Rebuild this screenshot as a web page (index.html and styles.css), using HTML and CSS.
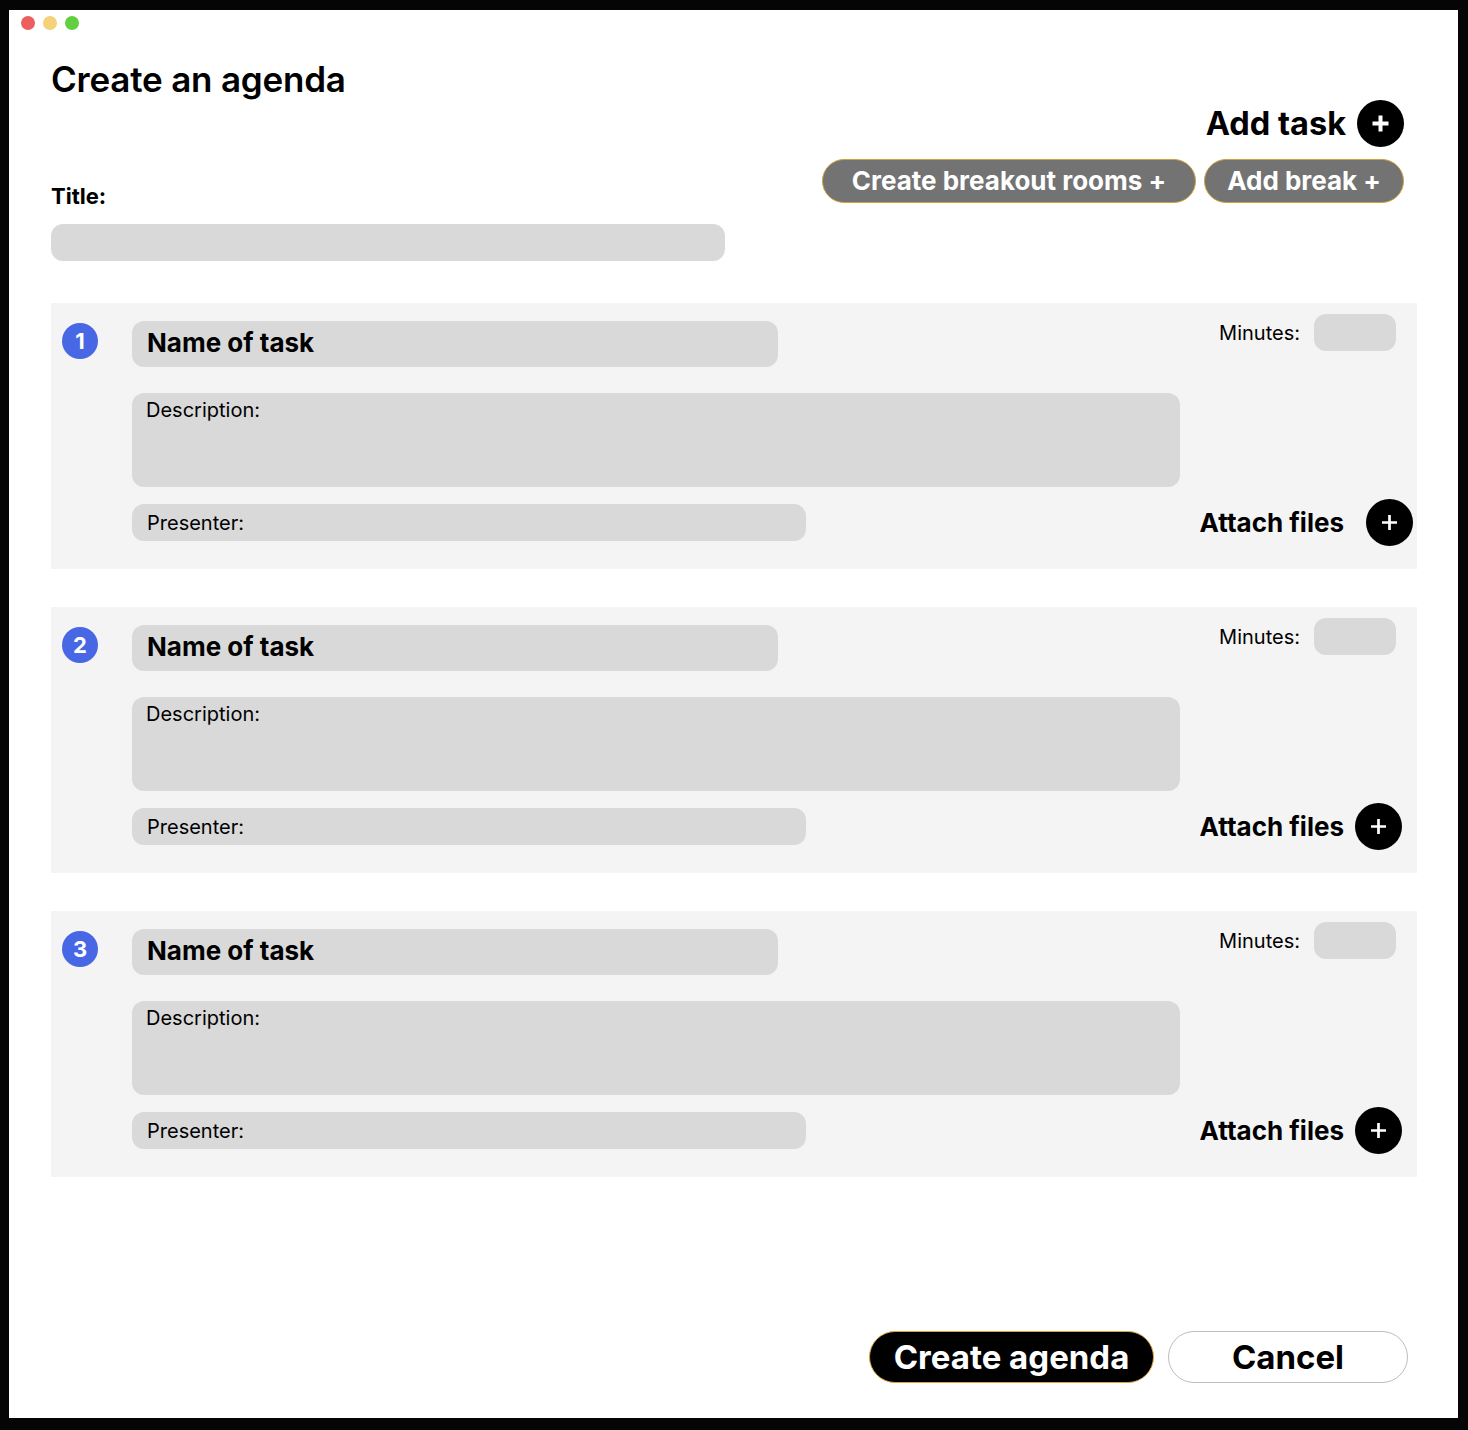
FILE: index.html
```html
<!DOCTYPE html>
<html lang="en">
<head>
<meta charset="utf-8">
<title>Create an agenda</title>
<link rel="stylesheet" href="styles.css">
</head>
<body>
<div class="window">
  <div class="titlebar">
    <span class="dot dot-red"></span>
    <span class="dot dot-yellow"></span>
    <span class="dot dot-green"></span>
  </div>
  <div class="content">
    <header class="header">
      <div class="header-left">
        <h1 class="page-title">Create an agenda</h1>
        <label class="field-label">Title:</label>
        <div class="input title-input"></div>
      </div>
      <div class="header-right">
        <div class="add-task">
          <span class="add-task-text">Add task</span>
          <span class="circle-btn circle-lg">
            <svg viewBox="0 0 47 47" width="47" height="47"><path d="M23.5 15.5v16M15.5 23.5h16" stroke="#fff" stroke-width="4" stroke-linecap="butt"/></svg>
          </span>
        </div>
        <div class="pill-row">
          <button class="pill pill-wide">Create breakout rooms +</button>
          <button class="pill">Add break +</button>
        </div>
      </div>
    </header>

    <section class="tasks">
      <div class="card">
        <span class="num">1</span>
        <div class="input name-input">Name of task</div>
        <div class="minutes"><span>Minutes:</span><span class="input minutes-input"></span></div>
        <div class="input desc-input">Description:</div>
        <div class="input presenter-input">Presenter:</div>
        <div class="attach attach-wide"><span>Attach files</span>
          <span class="circle-btn">
            <svg viewBox="0 0 47 47" width="47" height="47"><path d="M23.5 16v15M16 23.5h15" stroke="#fff" stroke-width="2.7"/></svg>
          </span>
        </div>
      </div>

      <div class="card">
        <span class="num">2</span>
        <div class="input name-input">Name of task</div>
        <div class="minutes"><span>Minutes:</span><span class="input minutes-input"></span></div>
        <div class="input desc-input">Description:</div>
        <div class="input presenter-input">Presenter:</div>
        <div class="attach"><span>Attach files</span>
          <span class="circle-btn">
            <svg viewBox="0 0 47 47" width="47" height="47"><path d="M23.5 16v15M16 23.5h15" stroke="#fff" stroke-width="2.7"/></svg>
          </span>
        </div>
      </div>

      <div class="card">
        <span class="num">3</span>
        <div class="input name-input">Name of task</div>
        <div class="minutes"><span>Minutes:</span><span class="input minutes-input"></span></div>
        <div class="input desc-input">Description:</div>
        <div class="input presenter-input">Presenter:</div>
        <div class="attach"><span>Attach files</span>
          <span class="circle-btn">
            <svg viewBox="0 0 47 47" width="47" height="47"><path d="M23.5 16v15M16 23.5h15" stroke="#fff" stroke-width="2.7"/></svg>
          </span>
        </div>
      </div>
    </section>

    <footer class="footer">
      <button class="btn btn-primary">Create agenda</button>
      <button class="btn btn-secondary">Cancel</button>
    </footer>
  </div>
</div>
</body>
</html>
```
FILE: styles.css
```css
* { box-sizing: border-box; }

html, body {
  margin: 0;
  padding: 0;
  background: #050505;
}

body {
  font-family: Inter, "Noto Sans", "Liberation Sans", sans-serif;
  color: #000;
  height: 1430px;
  overflow: hidden;
}

.window {
  margin: 10px 0 0 9px;
  width: 1449px;
  height: 1408px;
  background: #fff;
  display: flex;
  flex-direction: column;
}

.titlebar {
  display: flex;
  gap: 8px;
  padding: 6px 0 0 12px;
}

.dot {
  width: 14px;
  height: 14px;
  border-radius: 50%;
  display: block;
}
.dot-red { background: #ec5f5f; }
.dot-yellow { background: #f4d17a; }
.dot-green { background: #62cf3f; }

.content {
  flex: 1;
  display: flex;
  flex-direction: column;
  padding: 0 41px 35px 42px;
}

/* Header */
.header {
  display: flex;
  justify-content: space-between;
  align-items: flex-start;
  margin-top: 28px;
}

.header-left {
  display: flex;
  flex-direction: column;
  width: 674px;
}

.page-title {
  margin: 0;
  font-size: 35px;
  line-height: 42px;
  font-weight: 600;
  letter-spacing: -0.2px;
}

.field-label {
  margin-top: 83px;
  font-size: 22px;
  line-height: 26px;
  font-weight: 700;
}

.input {
  background: #d9d9d9;
  border-radius: 12px;
}

.title-input {
  margin-top: 15px;
  height: 37px;
  width: 674px;
}

.header-right {
  display: flex;
  flex-direction: column;
  align-items: flex-end;
  padding-top: 42px;
  margin-right: 13px;
}

.add-task {
  display: flex;
  align-items: center;
  gap: 11px;
  height: 47px;
}

.add-task-text {
  font-size: 32.5px;
  line-height: 47px;
  font-weight: 700;
}

.circle-btn {
  width: 47px;
  height: 47px;
  border-radius: 50%;
  background: #000;
  display: flex;
  align-items: center;
  justify-content: center;
  flex: none;
}
.circle-btn svg { display: block; }

.pill-row {
  display: flex;
  gap: 8px;
  margin-top: 12px;
}

.pill {
  height: 44px;
  border-radius: 22px;
  background: #737373;
  border: 1.5px solid #d3a13c;
  color: #fff;
  font-family: inherit;
  font-size: 26px;
  font-weight: 700;
  padding: 0 22px;
  line-height: 1;
}
.pill-wide { padding: 0 29px; }

/* Tasks */
.tasks {
  display: flex;
  flex-direction: column;
  gap: 38px;
  margin-top: 42px;
}

.card {
  background: #f4f4f4;
  display: grid;
  grid-template-columns: 81px 1048px 1fr;
  grid-template-rows: auto auto auto;
  padding: 11px 0 23px 0;
}

.num {
  grid-column: 1;
  grid-row: 1;
  margin: 9px 0 0 11px;
  width: 36px;
  height: 36px;
  border-radius: 50%;
  background: #4767e4;
  color: #fff;
  font-size: 22px;
  font-weight: 700;
  display: flex;
  align-items: center;
  justify-content: center;
  line-height: 1;
}

.name-input {
  grid-column: 2;
  grid-row: 1;
  margin-top: 7px;
  width: 646px;
  height: 46px;
  padding: 0 0 3px 15px;
  display: flex;
  align-items: center;
  font-size: 26px;
  font-weight: 700;
}

.minutes {
  grid-column: 3;
  grid-row: 1;
  justify-self: end;
  align-self: start;
  margin-right: 21px;
  display: flex;
  align-items: center;
  gap: 14px;
  font-size: 20px;
}

.minutes-input {
  display: block;
  width: 82px;
  height: 37px;
}

.desc-input {
  grid-column: 2;
  grid-row: 2;
  margin-top: 26px;
  height: 94px;
  padding: 5px 14px;
  font-size: 20px;
  line-height: 24px;
}

.presenter-input {
  grid-column: 2;
  grid-row: 3;
  align-self: center;
  margin-top: 12px;
  width: 674px;
  height: 37px;
  padding-left: 15px;
  display: flex;
  align-items: center;
  font-size: 20px;
}

.attach {
  grid-column: 3;
  grid-row: 3;
  align-self: center;
  justify-self: end;
  margin-top: 12px;
  margin-right: 15px;
  display: flex;
  align-items: center;
  gap: 11px;
  font-size: 26px;
  font-weight: 700;
}

.attach-wide {
  margin-right: 4px;
  gap: 22px;
}

/* Footer */
.footer {
  margin-top: auto;
  display: flex;
  justify-content: flex-end;
  gap: 14px;
  padding-right: 9px;
}

.btn {
  height: 52px;
  border-radius: 26px;
  font-family: inherit;
  font-size: 33px;
  font-weight: 700;
  line-height: 1;
}

.btn-primary {
  width: 285px;
  background: #000;
  color: #fff;
  border: 1.5px solid #d9a541;
}

.btn-secondary {
  width: 240px;
  background: #fff;
  color: #000;
  border: 1px solid #bdbdbd;
}
```
